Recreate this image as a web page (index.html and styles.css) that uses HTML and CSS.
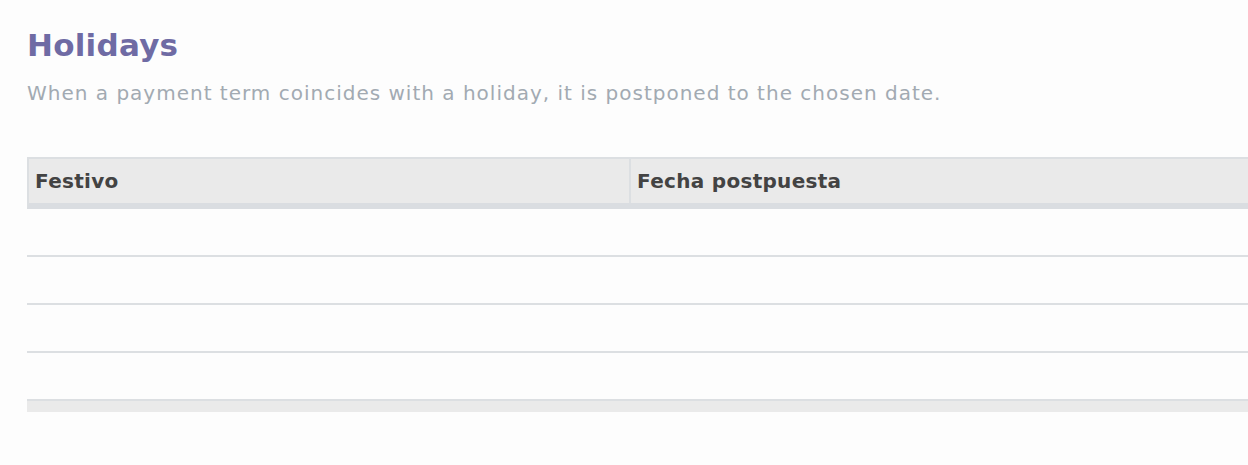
FILE: index.html
```html
<!DOCTYPE html>
<html lang="en">
<head>
<meta charset="utf-8">
<title>Holidays</title>
<link rel="stylesheet" href="styles.css">
</head>
<body>
<div class="page">
  <h1 class="title">Holidays</h1>
  <p class="subtitle">When a payment term coincides with a holiday, it is postponed to the chosen date.</p>
  <div class="table">
    <div class="thead">
      <div class="th th-first">Festivo</div>
      <div class="th">Fecha postpuesta</div>
    </div>
    <div class="tbody">
      <div class="tr"></div>
      <div class="tr"></div>
      <div class="tr"></div>
      <div class="tr"></div>
    </div>
    <div class="tfoot"></div>
  </div>
</div>
</body>
</html>
```
FILE: styles.css
```css
html, body {
  margin: 0;
  padding: 0;
  background: #fdfdfd;
  overflow: hidden;
}
body {
  font-family: "DejaVu Sans", "Liberation Sans", sans-serif;
}
.page {
  padding-left: 27px;
}
.title {
  margin: 27px 0 0 0;
  font-size: 31px;
  line-height: 36px;
  font-weight: bold;
  letter-spacing: 0.25px;
  color: #6f6ba4;
}
.subtitle {
  margin: 18px 0 0 0;
  font-size: 20px;
  line-height: 24px;
  letter-spacing: 1px;
  color: #a2aab2;
  white-space: nowrap;
}
.table {
  margin-top: 52px;
}
.thead {
  display: grid;
  grid-template-columns: 602px 1fr;
  background: #eaeaea;
  border-top: 2px solid #dcdfe2;
  border-left: 2px solid #dcdfe2;
  border-bottom: 6px solid #dadde1;
}
.th {
  height: 44px;
  line-height: 44px;
  padding-left: 6px;
  font-size: 20px;
  font-weight: bold;
  letter-spacing: 0.3px;
  color: #434343;
}
.th-first {
  border-right: 2px solid #dcdfe2;
}
.tr {
  height: 46px;
  border-bottom: 2px solid #dcdfe2;
}
.tfoot {
  height: 11px;
  background: #eaeaea;
}
```
